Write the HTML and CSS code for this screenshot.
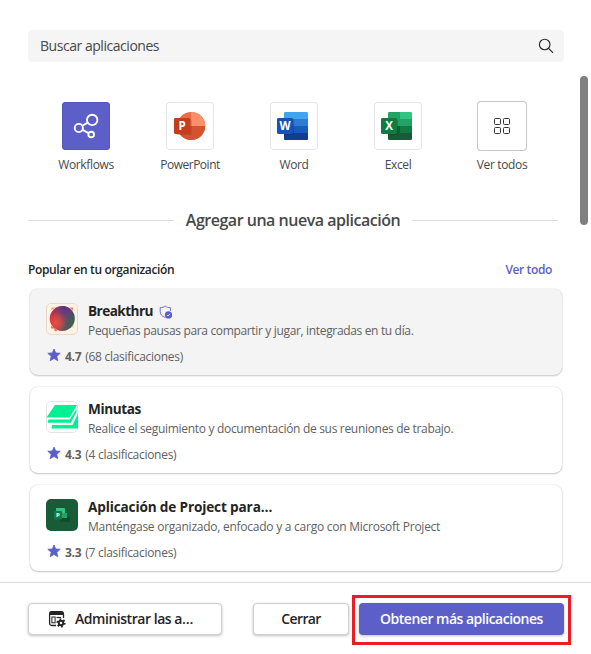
FILE: index.html
```html
<!DOCTYPE html>
<html lang="es">
<head>
<meta charset="utf-8">
<title>Aplicaciones</title>
<link rel="stylesheet" href="styles.css">
</head>
<body>
<div class="dialog">
  <main class="content">
    <div class="search">
      <span class="search-text">Buscar aplicaciones</span>
      <svg class="search-icon" width="16" height="16" viewBox="0 0 16 16" fill="none" stroke="#242424" stroke-width="1.1" stroke-linecap="round"><circle cx="6.7" cy="6.5" r="5.3"/><path d="M10.6 10.4 14.6 14.4"/></svg>
    </div>

    <div class="tiles">
      <div class="tile">
        <div class="tile-icon purple">
          <svg width="48" height="48" viewBox="0 0 48 48" fill="none" stroke="#fff" stroke-width="1.9"><circle cx="30.2" cy="17.9" r="5.2"/><circle cx="16.8" cy="26" r="4.1"/><circle cx="29.2" cy="32.5" r="2.8"/><path d="M20.4 23.8 25.7 20.6M20.6 27.8 26.6 31.2"/></svg>
        </div>
        <span class="label workflows">Workflows</span>
      </div>
      <div class="tile">
        <div class="tile-icon">
          <svg width="48" height="48" viewBox="0 0 48 48"><circle cx="25.2" cy="24" r="14" fill="#ed6c47"/><path d="M25.2 10a14 14 0 0 1 14 14h-14z" fill="#ff8f6b"/><path d="M11.2 24a14 14 0 0 0 28 0z" fill="#d35230"/><path d="M11 17h12.600a2 2 0 0 1 2 2v14H11z" fill="#8b2c16" opacity=".3"/><rect x="8" y="16" width="16" height="16" rx="1.400" fill="#c43e1c"/><text class="logo-letter" x="16" y="28.200">P</text></svg>
        </div>
        <span class="label powerpoint">PowerPoint</span>
      </div>
      <div class="tile">
        <div class="tile-icon">
          <svg width="48" height="48" viewBox="0 0 48 48"><path d="M14 37.500h24" stroke="#a8b4c4"/><path d="M14 11.300A1.300 1.300 0 0 1 15.300 10h21.400A1.300 1.300 0 0 1 38 11.300V17H14z" fill="#41a5ee"/><path d="M14 17h24v7H14z" fill="#2b7cd3"/><path d="M14 24h24v7H14z" fill="#185abd"/><path d="M14 31h24v5.700A1.300 1.300 0 0 1 36.700 38H15.300A1.300 1.300 0 0 1 14 36.700z" fill="#103f91"/><path d="M14 17h8.600a1.500 1.500 0 0 1 1.500 1.500V33H14z" fill="#0b2c68" opacity=".3"/><rect x="7" y="16" width="16" height="16" rx="1.400" fill="#1453b8"/><text class="logo-letter" x="15" y="28">W</text></svg>
        </div>
        <span class="label">Word</span>
      </div>
      <div class="tile">
        <div class="tile-icon">
          <svg width="48" height="48" viewBox="0 0 48 48"><path d="M14 11.300A1.300 1.300 0 0 1 15.300 10H26v7H14z" fill="#21a366"/><path d="M26 10h10.700A1.300 1.300 0 0 1 38 11.300V17H26z" fill="#33c481"/><path d="M14 17h12v7H14z" fill="#21a366"/><path d="M26 17h12v7H26z" fill="#21a366"/><path d="M14 24h12v7H14z" fill="#185c37"/><path d="M26 24h12v7H26z" fill="#107c41"/><path d="M14 31h24v5.700A1.300 1.300 0 0 1 36.700 38H15.300A1.300 1.300 0 0 1 14 36.700z" fill="#185c37"/><path d="M14 17h8.600a1.500 1.500 0 0 1 1.500 1.500V33H14z" fill="#0b3b20" opacity=".3"/><rect x="7" y="16" width="16" height="16" rx="1.400" fill="#107c41"/><text class="logo-letter" x="15" y="28.200">X</text></svg>
        </div>
        <span class="label">Excel</span>
      </div>
      <div class="tile">
        <div class="tile-icon all">
          <svg width="18" height="18" viewBox="0 0 18 18" fill="none" stroke="#333"><rect x="1.500" y="1.500" width="6" height="6" rx="1"/><rect x="10.500" y="1.500" width="6" height="6" rx="1"/><rect x="1.500" y="10.500" width="6" height="6" rx="1"/><rect x="10.500" y="10.500" width="6" height="6" rx="1"/></svg>
        </div>
        <span class="label">Ver todos</span>
      </div>
    </div>

    <div class="divider"><h2>Agregar una nueva aplicación</h2></div>

    <div class="section-head"><h3>Popular en tu organización</h3><a class="see-all">Ver todo</a></div>

    <div class="cards">
      <article class="card active">
        <svg class="app-icon" width="32" height="32" viewBox="0 0 32 32"><defs><linearGradient id="orb" x1="0" y1=".35" x2="1" y2=".6"><stop offset="0" stop-color="#c8263f"/><stop offset=".3" stop-color="#b54450"/><stop offset=".65" stop-color="#665260"/><stop offset="1" stop-color="#2c6553"/></linearGradient><radialGradient id="violet" cx=".6" cy="0" r=".65"><stop offset="0" stop-color="#4c3294"/><stop offset="1" stop-color="#64327b" stop-opacity="0"/></radialGradient><radialGradient id="coral" cx=".23" cy=".68" r=".45"><stop offset="0" stop-color="#ec4b40"/><stop offset="1" stop-color="#ec4b40" stop-opacity="0"/></radialGradient></defs><rect x=".5" y=".5" width="31" height="31" rx="4.500" fill="#fff2e5" stroke="#e9d8cb"/><path d="M5.500 7V4.500h4z" fill="#e8a05a"/><path d="M23.500 4.500h3.500V8z" fill="#f18a5c"/><path d="M5 22.500v3h3l1 3 2.500-1z" fill="#f86b4b"/><path d="M27.500 21v3.500h-3z" fill="#f5c88b"/><circle cx="16.300" cy="15.500" r="12.500" fill="url(#orb)"/><circle cx="16.300" cy="15.500" r="12.500" fill="url(#violet)"/><circle cx="16.300" cy="15.500" r="12.500" fill="url(#coral)"/></svg>
        <div class="info">
          <h4><span class="t-break">Breakthru</span><svg class="shield" width="14" height="14" viewBox="0 0 14 14"><path d="M6.200 1C5 2.300 3.300 2.500 1.200 2.600V6.500c0 3.100 1.900 4.900 5 6M6.200 1C7.500 2.300 9.200 2.600 11.400 2.600V6" fill="none" stroke="#6f73cc" stroke-width="1"/><circle cx="9.500" cy="9.900" r="3.600" fill="#5b5fc7"/><path d="m8 10 1 1 2-2.200" fill="none" stroke="#fff" stroke-width=".8"/></svg></h4>
          <p class="desc d1">Pequeñas pausas para compartir y jugar, integradas en tu día.</p>
        </div>
        <p class="rating"><svg width="14" height="14" viewBox="0 0 14 14"><path d="m7 1 1.700 3.900 4.500.4-3.400 3 1 4.400L7 10.400 3.200 12.700l1-4.400-3.400-3 4.500-.4z" fill="#5b5fc7" stroke="#5b5fc7" stroke-width=".8" stroke-linejoin="round"/></svg><b>4.7</b><span>(68 clasificaciones)</span></p>
      </article>

      <article class="card">
        <svg class="app-icon" width="32" height="32" viewBox="0 0 32 32"><rect x=".5" y=".5" width="31" height="31" rx="4.500" fill="#fff" stroke="#e5e5e5"/><path d="M9 4h22L23.500 16.500H.5zM2.500 18.500h21.300L30.500 8v3l-5.700 10.700H1.500zM6 24h20.500L32 12.500v15H5.500z" fill="#00f092"/></svg>
        <div class="info">
          <h4><span class="t-min">Minutas</span></h4>
          <p class="desc d2">Realice el seguimiento y documentación de sus reuniones de trabajo.</p>
        </div>
        <p class="rating"><svg width="14" height="14" viewBox="0 0 14 14"><path d="m7 1 1.700 3.900 4.500.4-3.400 3 1 4.400L7 10.400 3.200 12.700l1-4.400-3.400-3 4.500-.4z" fill="#5b5fc7" stroke="#5b5fc7" stroke-width=".8" stroke-linejoin="round"/></svg><b>4.3</b><span>(4 clasificaciones)</span></p>
      </article>

      <article class="card">
        <svg class="app-icon" width="32" height="32" viewBox="0 0 32 32"><rect width="32" height="32" rx="5" fill="#185c37"/><path d="M14 18h9a1 1 0 0 1 1 1v3a1 1 0 0 1-1 1h-9z" fill="#124b2c"/><path d="M15 14h6v5h-6z" fill="#21a366"/><path d="M10 9h8a1 1 0 0 1 1 1v4h-9z" fill="#33c481"/><rect x="8" y="12" width="8" height="8.500" rx="1" fill="#107c41"/><text class="logo-letter tiny" x="12" y="18.400">P</text></svg>
        <div class="info">
          <h4><span class="t-proj">Aplicación de Project para…</span></h4>
          <p class="desc d3">Manténgase organizado, enfocado y a cargo con Microsoft Project</p>
        </div>
        <p class="rating"><svg width="14" height="14" viewBox="0 0 14 14"><path d="m7 1 1.700 3.900 4.500.4-3.400 3 1 4.400L7 10.400 3.200 12.700l1-4.400-3.400-3 4.500-.4z" fill="#5b5fc7" stroke="#5b5fc7" stroke-width=".8" stroke-linejoin="round"/></svg><b>3.3</b><span>(7 clasificaciones)</span></p>
      </article>
    </div>
    <div class="scroll-thumb"></div>
  </main>

  <footer class="footer">
    <button class="btn manage"><svg width="18" height="18" viewBox="0 0 18 18"><path d="M1 5V3.500A2.500 2.500 0 0 1 3.500 1h10A2.500 2.500 0 0 1 16 3.500V5z" fill="#242424"/><path d="M1.600 4v9.500a2 2 0 0 0 2 2H8M15.500 4v4" fill="none" stroke="#242424" stroke-width="1.300"/><rect x="3.900" y="7" width="3.200" height="5.800" fill="none" stroke="#242424"/><path d="M8.500 7.500H13" stroke="#242424" stroke-width="1.200"/><circle cx="13" cy="13" r="3.800" fill="none" stroke="#242424" stroke-width="1.600" stroke-dasharray="1.800 2.180"/><circle cx="13" cy="13" r="2.200" fill="none" stroke="#242424" stroke-width="2"/></svg><span>Administrar las a…</span></button>
    <button class="btn close"><span>Cerrar</span></button>
    <div class="primary-wrap"><button class="btn primary"><span>Obtener más aplicaciones</span></button></div>
  </footer>
</div>
</body>
</html>
```
FILE: styles.css
```css
* { box-sizing: border-box; }
body { margin: 0; background: #fff; font-family: "Open Sans", "Noto Sans", sans-serif; color: #242424; }
h2, h3, h4, p { margin: 0; }
svg { display: block; flex: none; }
span, b, a, h3 { white-space: nowrap; }

.dialog { width: 591px; height: 654px; display: flex; flex-direction: column; overflow: hidden; }
.content { position: relative; flex: 1; padding: 30px 27px 0 28px; }

.search { height: 32px; display: flex; align-items: center; justify-content: space-between; padding: 0 10px 0 12px; background: #f5f5f5; border-radius: 4px; }
.search-text { padding-bottom: 2px; font-size: 14px; color: #484848; letter-spacing: -0.46px; }

.tiles { display: grid; grid-template-columns: repeat(5, 104px); padding: 39px 0 0 6px; }
.tile { display: flex; flex-direction: column; align-items: center; }
.tile-icon { width: 48px; height: 48px; margin: 1px 0; display: flex; align-items: center; justify-content: center; border-radius: 4px; box-shadow: inset 0 0 0 1px #e6e6e6; overflow: hidden; }
.tile-icon.purple { background: #5b5fc7; box-shadow: inset 0 0 0 1px #5558b5; }
.tile-icon.all { width: 50px; height: 50px; margin: 0; box-shadow: inset 0 0 0 1px #c7c7c7; }
.label { margin-top: 6px; line-height: 16px; font-size: 12px; color: #484848; letter-spacing: -0.35px; }
.label.powerpoint { letter-spacing: -0.48px; }
.logo-letter { font-size: 11.5px; font-weight: 700; fill: #fff; text-anchor: middle; }
.logo-letter.tiny { font-size: 6px; }

.divider { display: flex; align-items: center; gap: 12px; height: 24px; margin: 35px 6px 0 0; }
.divider::before, .divider::after { content: ""; flex: 1; height: 1px; background: #dcdcdc; }
.divider h2 { font-size: 16px; line-height: 24px; font-weight: 600; color: #484848; white-space: nowrap; letter-spacing: -0.48px; }

.section-head { display: flex; justify-content: space-between; height: 16px; margin: 30px 12px 0 0; line-height: 16px; }
.section-head h3 { font-size: 12px; font-weight: 550; letter-spacing: -0.36px; }
.see-all { font-size: 12px; font-weight: 600; color: #5b5fc7; letter-spacing: -0.37px; }

.cards { display: flex; flex-direction: column; gap: 12px; padding: 11px 2px 0; }
.card { height: 86px; display: grid; grid-template-columns: 32px 1fr; grid-template-rows: 38px 16px; column-gap: 10px; row-gap: 9px; padding: 13px 16px; border-radius: 8px; background: #fff; box-shadow: 0 0 1.5px rgba(0,0,0,.2), 0 1px 2px rgba(0,0,0,.2); }
.card.active { background: #f4f4f4; }
.app-icon { margin-top: 1px; }
h4 { display: flex; align-items: center; gap: 6px; height: 20px; font-size: 13.6px; line-height: 20px; font-weight: 700; }
h4 span { padding-bottom: 2px; }
.t-break { letter-spacing: -0.55px; }
.t-min { letter-spacing: -0.4px; }
.t-proj { letter-spacing: -0.15px; }
.desc { height: 18px; line-height: 18px; font-size: 12px; color: #616161; white-space: nowrap; }
.d1 { letter-spacing: -0.34px; }
.d2 { letter-spacing: -0.31px; }
.d3 { letter-spacing: -0.25px; }
.rating { grid-column: 1 / 3; display: flex; align-items: center; gap: 4px; padding-left: 1px; line-height: 16px; font-size: 12px; color: #616161; letter-spacing: -0.29px; }
.rating svg { margin-bottom: 4px; }

.scroll-thumb { position: absolute; left: 580px; top: 76px; width: 8px; height: 149px; border-radius: 4px; background: #808080; }

.footer { height: 72px; flex: none; display: flex; padding: 12px 20px 0 28px; border-top: 1px solid #dcdcdc; }
.btn { height: 32px; margin-top: 8px; padding: 0; display: flex; align-items: center; justify-content: center; border: 1px solid #cfcfcf; border-radius: 4px; background: #fff; color: #242424; font: 600 14px/20px "Open Sans", "Noto Sans", sans-serif; letter-spacing: -0.46px; box-shadow: 0 1px 3px rgba(0,0,0,.25); }
.manage { width: 194px; gap: 9px; justify-content: flex-start; padding-left: 19px; }
.close { width: 96px; margin-left: 31px; letter-spacing: -0.6px; }
.primary-wrap { width: 219px; height: 50px; margin-left: 3px; padding: 5px 4px; border: 3px solid #ed1c24; }
.primary { width: 205px; margin: 0; border: 0; background: #5b5fc7; color: #fff; letter-spacing: -0.5px; }
```
